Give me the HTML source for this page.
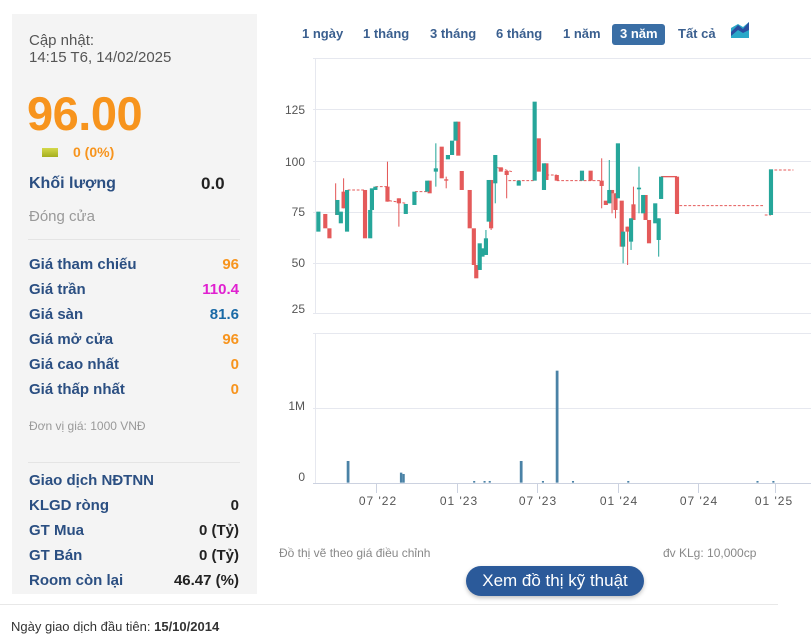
<!DOCTYPE html>
<html><head><meta charset="utf-8"><style>
*{margin:0;padding:0;box-sizing:border-box}
body{width:811px;height:636px;background:#fff;font-family:"Liberation Sans",Arial,sans-serif;position:relative;overflow:hidden}
.a{position:absolute;white-space:nowrap}
.panel{position:absolute;left:12px;top:14px;width:245px;height:580px;background:#f4f4f4}
.lbl{position:absolute;left:29px;font-weight:bold;font-size:15px;color:#2b4f82}
.val{position:absolute;right:572px;font-weight:bold;font-size:15px;text-align:right}
.tab{position:absolute;top:26px;font-size:13px;font-weight:bold;color:#3a5f8f}
</style></head><body>
<div class="panel"></div>
<div class="a" style="left:29px;top:32px;font-size:15px;color:#555;line-height:17px">Cập nhật:<br>14:15 T6, 14/02/2025</div>
<div class="a" style="left:27px;top:86px;font-size:47px;font-weight:bold;color:#f7941d;letter-spacing:-0.5px">96.00</div>
<div class="a" style="left:42px;top:148px;width:16px;height:9px;background:linear-gradient(#d4d84a,#a5ae1e)"></div>
<div class="a" style="left:73px;top:144px;font-size:14px;font-weight:bold;color:#f7941d">0 (0%)</div>
<div class="lbl" style="top:175px;font-size:16px">Khối lượng</div>
<div class="a" style="left:201px;top:174px;font-size:17px;font-weight:bold;color:#222">0.0</div>
<div class="a" style="left:29px;top:208px;font-size:15px;color:#999">Đóng cửa</div>
<div class="a" style="left:28px;top:239px;width:212px;height:1px;background:#e4e4e4"></div>
<div class="lbl" style="top:256px">Giá tham chiếu</div><div class="val" style="top:256px;color:#f7941d">96</div>
<div class="lbl" style="top:281px">Giá trần</div><div class="val" style="top:281px;color:#e020d0">110.4</div>
<div class="lbl" style="top:306px">Giá sàn</div><div class="val" style="top:306px;color:#1a6aa6">81.6</div>
<div class="lbl" style="top:331px">Giá mở cửa</div><div class="val" style="top:331px;color:#f7941d">96</div>
<div class="lbl" style="top:356px">Giá cao nhất</div><div class="val" style="top:356px;color:#f7941d">0</div>
<div class="lbl" style="top:381px">Giá thấp nhất</div><div class="val" style="top:381px;color:#f7941d">0</div>
<div class="a" style="left:29px;top:419px;font-size:12px;color:#999">Đơn vị giá: 1000 VNĐ</div>
<div class="a" style="left:28px;top:462px;width:212px;height:1px;background:#e4e4e4"></div>
<div class="lbl" style="top:472px">Giao dịch NĐTNN</div>
<div class="lbl" style="top:497px">KLGD ròng</div><div class="val" style="top:497px;color:#222">0</div>
<div class="lbl" style="top:522px">GT Mua</div><div class="val" style="top:522px;color:#222">0 (Tỷ)</div>
<div class="lbl" style="top:547px">GT Bán</div><div class="val" style="top:547px;color:#222">0 (Tỷ)</div>
<div class="lbl" style="top:572px">Room còn lại</div><div class="val" style="top:572px;color:#222">46.47 (%)</div>
<div class="a" style="left:0;top:604px;width:778px;height:1px;background:#e8e8e8"></div>
<div class="a" style="left:11px;top:619px;font-size:13px;color:#333">Ngày giao dịch đầu tiên: <b>15/10/2014</b></div>

<div class="tab" style="left:302px">1 ngày</div>
<div class="tab" style="left:363px">1 tháng</div>
<div class="tab" style="left:430px">3 tháng</div>
<div class="tab" style="left:496px">6 tháng</div>
<div class="tab" style="left:563px">1 năm</div>
<div class="a" style="left:612px;top:24px;width:53px;height:21px;background:#3a6ea5;border-radius:3px"></div>
<div class="tab" style="left:620px;color:#fff">3 năm</div>
<div class="tab" style="left:678px">Tất cả</div>

<svg class="a" style="left:0;top:0" width="811" height="636">
<path d="M731 38 L731 28 L738 24 L743 27 L749 22 L749 38Z" fill="#2aa8c8"/>
<path d="M731 32 L738 25 L743 29 L749 22 L749 30 L743 33 L738 30 L731 36Z" fill="#2a4fa0"/>
<g stroke="#e6e8ef" stroke-width="1">
<line x1="313" y1="58.5" x2="811" y2="58.5"/>
<line x1="313" y1="109.5" x2="811" y2="109.5"/><line x1="313" y1="161.5" x2="811" y2="161.5"/>
<line x1="313" y1="212.5" x2="811" y2="212.5"/><line x1="313" y1="263.5" x2="811" y2="263.5"/>
<line x1="313" y1="313.5" x2="811" y2="313.5"/>
<line x1="313" y1="333.5" x2="811" y2="333.5"/><line x1="313" y1="408.5" x2="811" y2="408.5"/>
<line x1="315.5" y1="58" x2="315.5" y2="314"/><line x1="315.5" y1="333" x2="315.5" y2="483"/>
</g>
<line x1="313" y1="483.5" x2="811" y2="483.5" stroke="#ccd2e0"/>
<g stroke="#ccd2e0"><line x1="376.5" y1="483" x2="376.5" y2="493"/><line x1="457.5" y1="483" x2="457.5" y2="493"/><line x1="537.5" y1="483" x2="537.5" y2="493"/><line x1="618.5" y1="483" x2="618.5" y2="493"/><line x1="698.5" y1="483" x2="698.5" y2="493"/><line x1="775.5" y1="483" x2="775.5" y2="493"/></g>
<g font-size="12" fill="#555" font-family="Liberation Sans,sans-serif" text-anchor="end">
<text x="305" y="114">125</text><text x="305" y="166">100</text><text x="305" y="216">75</text><text x="305" y="267">50</text><text x="305" y="313">25</text>
<text x="305" y="410">1M</text><text x="305" y="481">0</text></g>
<g font-size="12" fill="#555" font-family="Liberation Sans,sans-serif" text-anchor="middle" letter-spacing="1">
<text x="378" y="505">07 '22</text><text x="459" y="505">01 '23</text><text x="538" y="505">07 '23</text><text x="619" y="505">01 '24</text><text x="699" y="505">07 '24</text><text x="774" y="505">01 '25</text></g>

<g transform="translate(270,10) scale(0.3455,0.3333)">
<g stroke="#e45a5a" stroke-width="3" stroke-dasharray="8 5">
<line x1="225" y1="540" x2="275" y2="540"/><line x1="305" y1="530" x2="340" y2="530"/><line x1="345" y1="572" x2="393" y2="580"/>
<line x1="420" y1="545" x2="455" y2="545"/><line x1="655" y1="472" x2="700" y2="485"/><line x1="690" y1="512" x2="766" y2="512"/>
<line x1="800" y1="495" x2="830" y2="495"/><line x1="830" y1="512" x2="960" y2="512"/>
<line x1="1185" y1="587" x2="1430" y2="587"/><line x1="1432" y1="615" x2="1450" y2="615"/><line x1="1460" y1="480" x2="1515" y2="480"/>
</g>
<line x1="1132" y1="500" x2="1178" y2="500" stroke="#e45a5a" stroke-width="4"/>
<g stroke-width="3">
<g stroke="#e45a5a"><line x1="190" y1="520" x2="190" y2="615"/><line x1="213" y1="505" x2="213" y2="595"/><line x1="340" y1="455" x2="340" y2="575"/><line x1="373" y1="565" x2="373" y2="650"/><line x1="510" y1="500" x2="510" y2="535"/><line x1="685" y1="483" x2="685" y2="565"/><line x1="640" y1="510" x2="640" y2="660"/><line x1="960" y1="445" x2="960" y2="595"/><line x1="990" y1="540" x2="990" y2="610"/><line x1="1000" y1="550" x2="1000" y2="625"/><line x1="1035" y1="650" x2="1035" y2="765"/><line x1="1052" y1="530" x2="1052" y2="630"/></g>
<g stroke="#26a69a"><line x1="480" y1="400" x2="480" y2="530"/><line x1="652" y1="435" x2="652" y2="580"/><line x1="982" y1="450" x2="982" y2="580"/><line x1="1022" y1="665" x2="1022" y2="760"/><line x1="1045" y1="625" x2="1045" y2="720"/><line x1="1068" y1="470" x2="1068" y2="610"/><line x1="1125" y1="625" x2="1125" y2="740"/><line x1="625" y1="660" x2="625" y2="735"/></g>
</g>
<g fill="#e45a5a">
<rect x="154" y="612" width="12" height="43"/><rect x="166" y="655" width="12" height="30"/><rect x="207" y="545" width="12" height="50"/><rect x="269" y="540" width="12" height="145"/><rect x="334" y="530" width="12" height="45"/><rect x="367" y="565" width="12" height="15"/><rect x="456" y="512" width="12" height="38"/><rect x="491" y="410" width="12" height="95"/><rect x="504" y="508" width="12" height="4"/><rect x="539" y="335" width="12" height="102"/><rect x="549" y="483" width="12" height="57"/><rect x="572" y="540" width="12" height="115"/><rect x="584" y="655" width="12" height="110"/><rect x="591" y="765" width="12" height="40"/><rect x="634" y="510" width="12" height="145"/><rect x="662" y="472" width="12" height="13"/><rect x="679" y="483" width="12" height="12"/><rect x="772" y="385" width="12" height="100"/><rect x="794" y="460" width="12" height="50"/><rect x="824" y="495" width="12" height="17"/><rect x="922" y="482" width="12" height="30"/><rect x="954" y="512" width="12" height="16"/><rect x="966" y="572" width="12" height="13"/><rect x="984" y="540" width="12" height="10"/><rect x="994" y="550" width="12" height="50"/><rect x="1012" y="572" width="12" height="138"/><rect x="1029" y="650" width="12" height="15"/><rect x="1046" y="583" width="12" height="47"/><rect x="1081" y="555" width="12" height="75"/><rect x="1091" y="630" width="12" height="70"/><rect x="1172" y="500" width="12" height="112"/></g>
<g fill="#26a69a">
<rect x="134" y="605" width="12" height="60"/><rect x="189" y="570" width="12" height="45"/><rect x="199" y="605" width="12" height="35"/><rect x="217" y="540" width="12" height="125"/><rect x="284" y="600" width="12" height="85"/><rect x="289" y="535" width="12" height="65"/><rect x="299" y="530" width="12" height="10"/><rect x="387" y="582" width="12" height="30"/><rect x="412" y="545" width="12" height="40"/><rect x="449" y="512" width="12" height="33"/><rect x="474" y="475" width="12" height="10"/><rect x="509" y="435" width="12" height="13"/><rect x="521" y="392" width="12" height="43"/><rect x="531" y="335" width="12" height="57"/><rect x="601" y="700" width="12" height="80"/><rect x="609" y="715" width="12" height="25"/><rect x="619" y="685" width="12" height="50"/><rect x="627" y="510" width="12" height="125"/><rect x="646" y="435" width="12" height="85"/><rect x="714" y="512" width="12" height="15"/><rect x="760" y="275" width="12" height="237"/><rect x="787" y="460" width="12" height="80"/><rect x="897" y="482" width="12" height="30"/><rect x="976" y="540" width="12" height="40"/><rect x="1001" y="400" width="12" height="165"/><rect x="1016" y="665" width="12" height="45"/><rect x="1039" y="625" width="12" height="70"/><rect x="1062" y="533" width="12" height="5"/><rect x="1074" y="555" width="12" height="55"/><rect x="1109" y="580" width="12" height="60"/><rect x="1119" y="625" width="12" height="65"/><rect x="1126" y="500" width="12" height="67"/><rect x="1444" y="478" width="12" height="137"/></g>
</g>
<g transform="translate(270,300) scale(0.3455,0.3333)" fill="#4a82a6">
<rect x="222" y="483" width="8" height="65"/><rect x="376" y="518" width="7" height="30"/><rect x="383" y="522" width="7" height="26"/><rect x="723" y="483" width="8" height="65"/><rect x="827" y="212" width="8" height="336"/>
<rect x="588" y="543" width="6" height="5"/><rect x="618" y="543" width="6" height="5"/><rect x="633" y="543" width="6" height="5"/><rect x="787" y="543" width="6" height="5"/><rect x="874" y="543" width="6" height="5"/><rect x="1034" y="543" width="6" height="5"/><rect x="1408" y="543" width="6" height="5"/><rect x="1454" y="543" width="6" height="5"/>
</g>
</svg>

<div class="a" style="left:279px;top:546px;font-size:12px;color:#888">Đồ thị vẽ theo giá điều chỉnh</div>
<div class="a" style="left:663px;top:546px;font-size:12px;color:#888">đv KLg: 10,000cp</div>
<div class="a" style="left:466px;top:566px;width:178px;height:30px;background:#2b5a9a;border-radius:15px;color:#fff;font-size:17px;text-align:center;line-height:29px;box-shadow:0 2px 4px rgba(0,0,0,0.25)">Xem đồ thị kỹ thuật</div>
</body></html>
